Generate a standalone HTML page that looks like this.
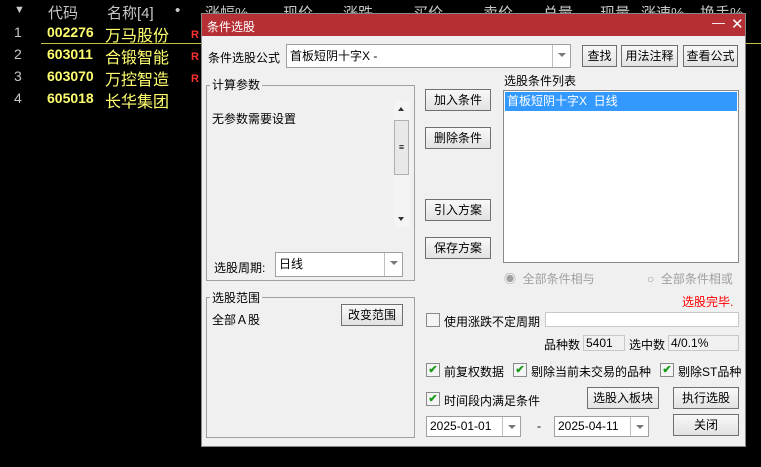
<!DOCTYPE html>
<html><head><meta charset="utf-8"><style>
*{margin:0;padding:0;box-sizing:border-box}
body{width:761px;height:467px;background:#000;position:relative;overflow:hidden;font-family:"Liberation Sans","Noto Sans CJK SC",sans-serif;font-size:12px}
.a{position:absolute;white-space:nowrap}
.h{color:#c8c8c8;font-size:15px;top:2px}
.n{color:#c8c8c8;font-size:14px}
.c{color:#ffff70;font-size:14px;font-weight:bold}
.m{color:#ffff70;font-size:16px}
.r{color:#ff3030;font-size:11px;font-weight:bold}
#d{position:absolute;left:201px;top:13px;width:545px;height:434px;background:#f0f0f0;border:1px solid #888}
#d .a{color:#000}
.btn{position:absolute;border:1px solid #707070;background:linear-gradient(#f8f8f8,#e2e2e2);text-align:center;font-size:12px;line-height:20px;color:#000}
.box{position:absolute;border:1px solid #a0a0a0}
.leg{position:absolute;background:#f0f0f0;padding:0 2px;font-size:12px;line-height:14px}
.in{position:absolute;background:#fff;border:1px solid #a0a0a0;font-size:12px;line-height:20px;padding-left:3px}
.dd{position:absolute;top:0;right:0;width:18px;height:100%;border-left:1px solid #c0c0c0;}
.dd:after{content:"";position:absolute;left:5px;top:8px;border:4px solid transparent;border-top:4px solid #777}
.cb{position:absolute;width:14px;height:14px;border:1px solid #8a8a8a;background:#f4f4f4;color:#1a9a1a;font-size:11px;line-height:12px;text-align:center;font-weight:bold}
</style></head><body>
<div class="a h" style="left:14px;font-size:11px;top:4px">▼</div>
<div class="a h" style="left:48px">代码</div>
<div class="a h" style="left:107px">名称[4]</div>
<div class="a h" style="left:175px">•</div>
<div class="a h" style="left:205px">涨幅%</div>
<div class="a h" style="left:283px">现价</div>
<div class="a h" style="left:343px">涨跌</div>
<div class="a h" style="left:413px">买价</div>
<div class="a h" style="left:483px">卖价</div>
<div class="a h" style="left:543px">总量</div>
<div class="a h" style="left:600px">现量</div>
<div class="a h" style="left:641px">涨速%</div>
<div class="a h" style="left:700px">换手%</div>

<div class="a n" style="left:14px;top:24px">1</div><div class="a c" style="left:47px;top:24px">002276</div><div class="a m" style="left:105px;top:22px">万马股份</div><div class="a r" style="left:191px;top:29px">R</div>
<div class="a n" style="left:14px;top:46px">2</div><div class="a c" style="left:47px;top:46px">603011</div><div class="a m" style="left:105px;top:44px">合锻智能</div><div class="a r" style="left:191px;top:51px">R</div>
<div class="a n" style="left:14px;top:68px">3</div><div class="a c" style="left:47px;top:68px">603070</div><div class="a m" style="left:105px;top:66px">万控智造</div><div class="a r" style="left:191px;top:73px">R</div>
<div class="a n" style="left:14px;top:90px">4</div><div class="a c" style="left:47px;top:90px">605018</div><div class="a m" style="left:105px;top:88px">长华集团</div>
<div class="a" style="left:41px;top:43px;width:165px;height:1px;background:#c8c040"></div>
<div class="a" style="left:746px;top:43px;width:15px;height:1px;background:#c8c040"></div>

<div id="d">
<div class="a" style="left:0;top:0;width:543px;height:22px;background:#b52f35"></div>
<div class="a" style="left:5px;top:4px;color:#fff!important;font-size:12px">条件选股</div>
<div class="a" style="left:510px;top:1px;color:#fff!important;font-size:13px;font-weight:100">—</div>
<div class="a" style="left:529px;top:1px;color:#fff!important;font-size:15px">✕</div>

<div class="a" style="left:6px;top:35px">条件选股公式</div>
<div class="in" style="left:84px;top:30px;width:285px;height:24px;line-height:22px">首板短阴十字X -<div class="dd"></div></div>
<div class="btn" style="left:380px;top:31px;width:35px;height:22px">查找</div>
<div class="btn" style="left:419px;top:31px;width:57px;height:22px">用法注释</div>
<div class="btn" style="left:481px;top:31px;width:55px;height:22px">查看公式</div>

<div class="box" style="left:4px;top:71px;width:209px;height:196px"></div>
<div class="leg" style="left:8px;top:64px">计算参数</div>
<div class="a" style="left:10px;top:96px">无参数需要设置</div>
<div class="a" style="left:192px;top:87px;width:16px;height:126px;background:#f4f4f4"></div>
<div class="a" style="left:196px;top:90px;width:0;height:0;border:3px solid transparent;border-bottom:4px solid #333"></div>
<div class="a" style="left:196px;top:203px;width:0;height:0;border:3px solid transparent;border-top:4px solid #333"></div>
<div class="a" style="left:192px;top:106px;width:15px;height:55px;border:1px solid #b0b0b0;background:#e8e8e8;font-size:9px;text-align:center;line-height:52px">≡</div>
<div class="a" style="left:12px;top:245px">选股周期:</div>
<div class="in" style="left:73px;top:238px;width:128px;height:25px;line-height:23px">日线<div class="dd"></div></div>

<div class="box" style="left:4px;top:283px;width:209px;height:141px"></div>
<div class="leg" style="left:8px;top:277px">选股范围</div>
<div class="a" style="left:10px;top:297px">全部Ａ股</div>
<div class="btn" style="left:139px;top:290px;width:62px;height:22px">改变范围</div>

<div class="btn" style="left:223px;top:75px;width:66px;height:22px">加入条件</div>
<div class="btn" style="left:223px;top:113px;width:66px;height:22px">删除条件</div>
<div class="btn" style="left:223px;top:185px;width:66px;height:22px">引入方案</div>
<div class="btn" style="left:223px;top:223px;width:66px;height:22px">保存方案</div>

<div class="a" style="left:302px;top:58px">选股条件列表</div>
<div class="a" style="left:301px;top:76px;width:236px;height:173px;background:#fff;border:1px solid #8a8a8a"></div>
<div class="a" style="left:303px;top:78px;width:232px;height:19px;background:#3399ff;color:#fff!important;padding-left:2px;line-height:19px">首板短阴十字X&nbsp; 日线</div>
<div class="a" style="left:302px;top:256px;color:#a0a0a0!important;font-size:12px">◉&nbsp; 全部条件相与</div>
<div class="a" style="left:445px;top:256px;color:#a0a0a0!important;font-size:12px">○&nbsp; 全部条件相或</div>
<div class="a" style="left:480px;top:279px;color:#f00!important">选股完毕.</div>

<div class="cb" style="left:224px;top:299px"></div>
<div class="a" style="left:242px;top:299px">使用涨跌不定周期</div>
<div class="a" style="left:343px;top:298px;width:194px;height:15px;background:#fff;border:1px solid #c8c8c8"></div>
<div class="a" style="left:342px;top:322px">品种数</div>
<div class="a" style="left:381px;top:321px;width:42px;height:16px;border:1px solid #c8c8c8;padding-left:2px;line-height:14px">5401</div>
<div class="a" style="left:427px;top:322px">选中数</div>
<div class="a" style="left:466px;top:321px;width:71px;height:16px;border:1px solid #c8c8c8;padding-left:2px;line-height:14px">4/0.1%</div>

<div class="cb" style="left:224px;top:349px">✔</div><div class="a" style="left:242px;top:349px">前复权数据</div>
<div class="cb" style="left:311px;top:349px">✔</div><div class="a" style="left:329px;top:349px">剔除当前未交易的品种</div>
<div class="cb" style="left:458px;top:349px">✔</div><div class="a" style="left:476px;top:349px">剔除ST品种</div>
<div class="cb" style="left:224px;top:378px">✔</div><div class="a" style="left:242px;top:378px">时间段内满足条件</div>
<div class="btn" style="left:385px;top:373px;width:72px;height:22px">选股入板块</div>
<div class="btn" style="left:471px;top:373px;width:66px;height:22px">执行选股</div>
<div class="in" style="left:224px;top:402px;width:95px;height:21px;line-height:19px;font-size:12px">2025-01-01<div class="dd"></div></div>
<div class="a" style="left:335px;top:405px">-</div>
<div class="in" style="left:352px;top:402px;width:95px;height:21px;line-height:19px;font-size:12px">2025-04-11<div class="dd"></div></div>
<div class="btn" style="left:471px;top:400px;width:66px;height:22px">关闭</div>
</div>
</body></html>
